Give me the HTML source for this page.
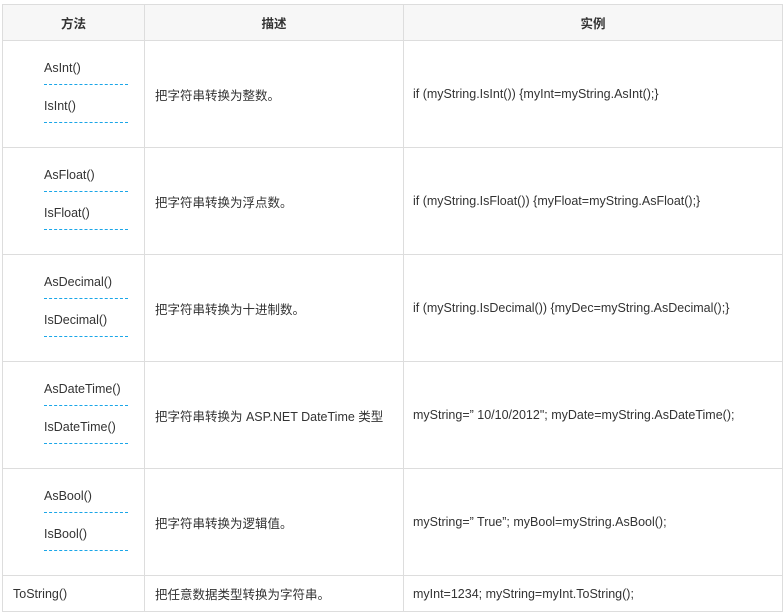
<!DOCTYPE html>
<html><head><meta charset="utf-8"><style>
body{margin:0;background:#fff;font-family:"Liberation Sans","Noto Sans CJK SC",sans-serif;font-size:12.5px;color:#333;}
table{position:absolute;left:2px;top:4px;border-collapse:collapse;width:780px;table-layout:fixed;}
td,th{border:1px solid #ddd;padding:0;}
th{background:#f7f7f7;height:35px;font-weight:bold;font-size:12.5px;}
td.d,td.e{padding-left:10px;vertical-align:middle;}
td.e{padding-left:9px;}
td.m{vertical-align:top;padding-left:41px;}
.it{width:84px;border-bottom:1px dashed #1aa6e8;line-height:20px;padding-bottom:6px;}
.it1{margin-top:17px;}
.it2{margin-top:11px;}
tr.r{height:107px;}
</style></head><body>
<table>
<colgroup><col style="width:142px"><col style="width:259px"><col style="width:379px"></colgroup>
<tr><th>方法</th><th>描述</th><th>实例</th></tr>
<tr class="r"><td class="m"><div class="it it1">AsInt()</div><div class="it it2">IsInt()</div></td><td class="d">把字符串转换为整数。</td><td class="e">if (myString.IsInt()) {myInt=myString.AsInt();}</td></tr>
<tr class="r"><td class="m"><div class="it it1">AsFloat()</div><div class="it it2">IsFloat()</div></td><td class="d">把字符串转换为浮点数。</td><td class="e">if (myString.IsFloat()) {myFloat=myString.AsFloat();}</td></tr>
<tr class="r"><td class="m"><div class="it it1">AsDecimal()</div><div class="it it2">IsDecimal()</div></td><td class="d">把字符串转换为十进制数。</td><td class="e">if (myString.IsDecimal()) {myDec=myString.AsDecimal();}</td></tr>
<tr class="r"><td class="m"><div class="it it1">AsDateTime()</div><div class="it it2">IsDateTime()</div></td><td class="d">把字符串转换为 ASP.NET DateTime 类型</td><td class="e">myString=” 10/10/2012"; myDate=myString.AsDateTime();</td></tr>
<tr class="r"><td class="m"><div class="it it1">AsBool()</div><div class="it it2">IsBool()</div></td><td class="d">把字符串转换为逻辑值。</td><td class="e">myString=” True”; myBool=myString.AsBool();</td></tr>
<tr style="height:36px"><td class="d">ToString()</td><td class="d">把任意数据类型转换为字符串。</td><td class="e">myInt=1234; myString=myInt.ToString();</td></tr>
</table>
</body></html>
